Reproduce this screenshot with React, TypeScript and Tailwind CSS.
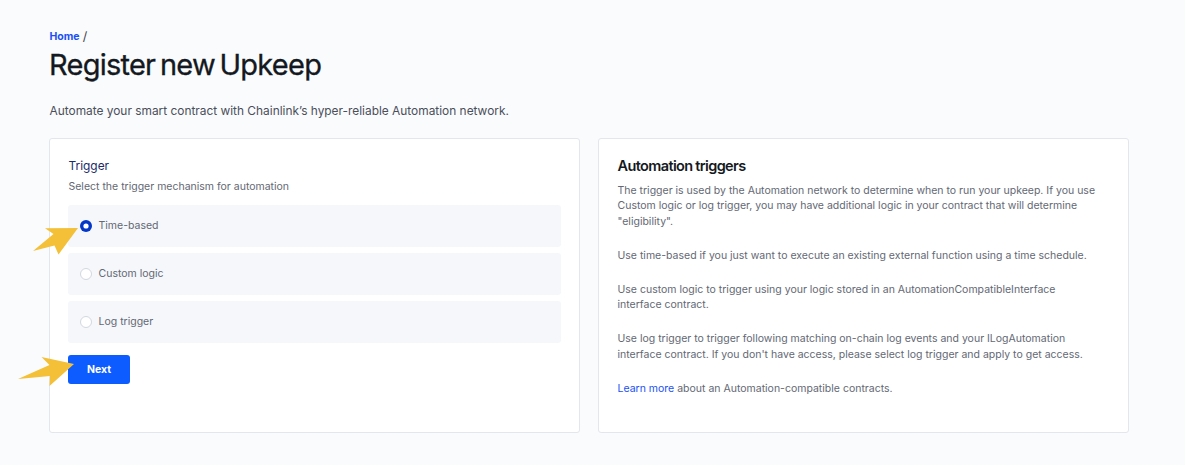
const options = [
  { label: "Time-based", checked: true },
  { label: "Custom logic", checked: false },
  { label: "Log trigger", checked: false },
];

function Radio({ checked }: { checked: boolean }) {
  if (checked) {
    return (
      <svg className="size-3 shrink-0" viewBox="0 0 12 12" aria-hidden="true">
        <circle cx="6" cy="6" r="6" fill="#0437c8" />
        <circle cx="6" cy="6" r="2.6" fill="#fff" />
      </svg>
    );
  }
  return <span className="size-3 shrink-0 rounded-full border border-[#d3d7e0] bg-white" />;
}

function TriggerCard() {
  return (
    <section className="h-[295px] w-[531px] rounded-[3px] border border-[#e3e6ec] bg-white px-[18px] pt-[19px]">
      <h2 className="pl-[0.5px] text-[11.9px] leading-4 text-[#1a2b6b]">Trigger</h2>
      <p className="mt-[5px] pl-[0.5px] text-[10.5px] leading-[15px] text-[#636874]">
        Select the trigger mechanism for automation
      </p>
      <div className="mt-[11px] flex flex-col gap-1.5">
        {options.map((o) => (
          <label
            key={o.label}
            className="flex h-[42px] items-center gap-[6.5px] rounded-[3px] bg-[#f5f7fb] pl-3 text-[10.5px] text-[#636874]"
          >
            <Radio checked={o.checked} />
            <span className="-mt-px">{o.label}</span>
          </label>
        ))}
      </div>
      <button className="mt-3 flex h-[29px] w-[62px] items-center justify-center rounded-[3px] bg-[#0d5cff] text-[10.5px] font-bold text-white">
        Next
      </button>
    </section>
  );
}

function InfoCard() {
  return (
    <section className="h-[295px] w-[531px] rounded-[3px] border border-[#e3e6ec] bg-white px-[18px] pt-[18px]">
      <h2 className="pl-[0.5px] text-[14.5px] leading-[18px] font-semibold tracking-[-0.62px] [word-spacing:-0.3px] text-[#141921]">
        Automation triggers
      </h2>
      <div className="mt-[7.7px] flex flex-col gap-[18.6px] pl-[0.5px] text-[10.5px] leading-[15.5px] whitespace-nowrap text-[#636874]">
        <p>
          The trigger is used by the Automation network to determine when to run your upkeep. If you use
          <br />
          Custom logic or log trigger, you may have additional logic in your contract that will determine
          <br />
          "eligibility".
        </p>
        <p>Use time-based if you just want to execute an existing external function using a time schedule.</p>
        <p>
          Use custom logic to trigger using your logic stored in an AutomationCompatibleInterface
          <br />
          interface contract.
        </p>
        <p>
          Use log trigger to trigger following matching on-chain log events and your ILogAutomation
          <br />
          interface contract. If you don't have access, please select log trigger and apply to get access.
        </p>
        <p>
          <a href="#" className="text-[#1a50f5]">Learn more</a> about an Automation-compatible contracts.
        </p>
      </div>
    </section>
  );
}

export default function App() {
  return (
    <main className="relative h-[465px] w-[1185px] overflow-hidden bg-[#fafbfd] pt-[29px] pl-[49px] font-['Inter',sans-serif]">
      <nav className="flex h-4 items-center gap-[3px] pl-[0.5px] text-[10.5px] leading-4 text-[#3e434d]">
        <a href="#" className="font-bold text-[#1a50f5]">Home</a>
        <span className="text-[12.5px]">/</span>
      </nav>
      <h1 className="mt-0.5 text-[29px] leading-9 font-normal tracking-[-0.75px] [word-spacing:-2.8px] text-[#141921] [-webkit-text-stroke:0.3px_#141921]">
        Register new Upkeep
      </h1>
      <p className="mt-5 pl-[0.5px] text-[11.9px] leading-4 text-[#4a4f5a]">
        Automate your smart contract with Chainlink’s hyper-reliable Automation network.
      </p>
      <div className="mt-[19px] flex gap-[18px]">
        <TriggerCard />
        <InfoCard />
      </div>
      <svg className="absolute top-[215px] left-[15px]" width="85" height="50" fill="#f3c037" aria-hidden="true">
        <path d="M63 13L30 13.3L38.5 19L18 36L39.5 30.5L43.5 39.5Z" />
      </svg>
      <svg className="absolute top-[345px] left-[15px]" width="85" height="50" fill="#f3c037" aria-hidden="true">
        <path d="M59 19L26.5 12L34.5 20L3 34L35 31L34.5 41Z" />
      </svg>
    </main>
  );
}
